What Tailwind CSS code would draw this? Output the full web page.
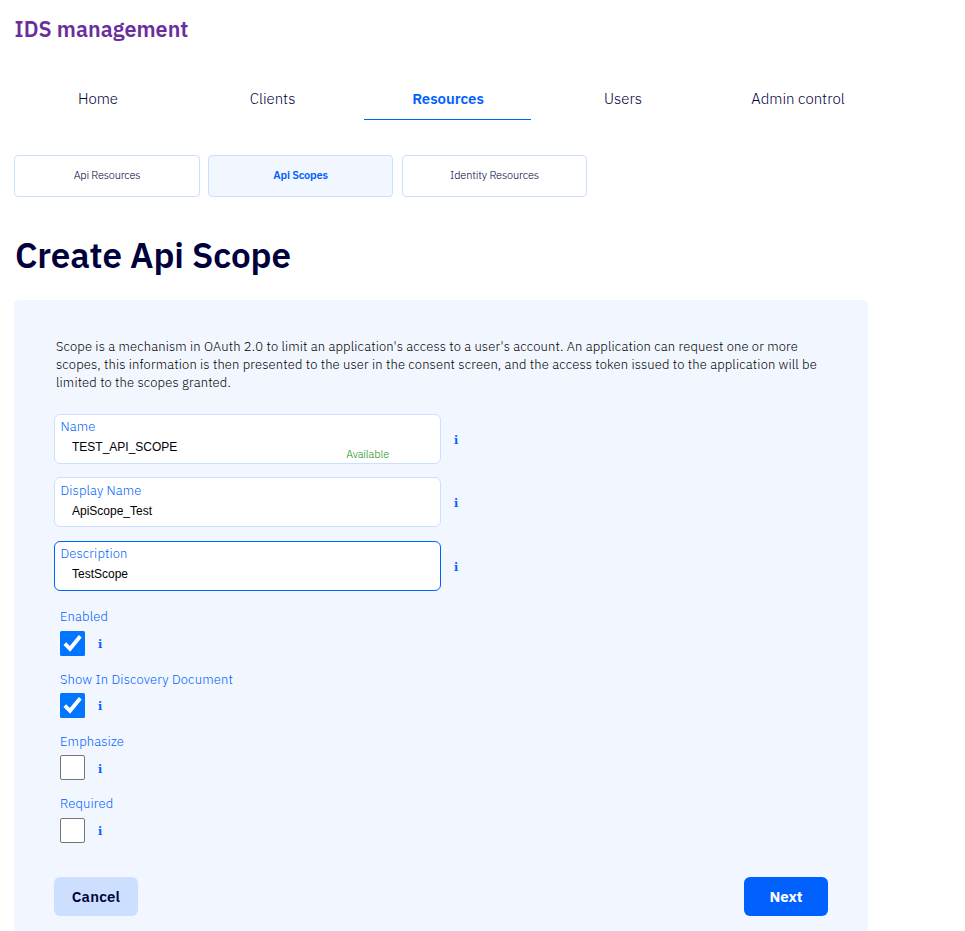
<!DOCTYPE html>
<html lang="en">
<head>
<meta charset="utf-8">
<title>IDS management</title>
<script src="https://cdn.jsdelivr.net/npm/@tailwindcss/browser@4"></script>
</head>
<body class="bg-white h-[931px] overflow-hidden font-['IBM_Plex_Sans','Roboto',sans-serif] font-light text-[#00003c]">
<div class="w-[854px] ml-[14px]">
  <header class="h-[60px] pt-[15px]"><a class="block w-fit pl-[0.5px] text-[21.5px] leading-[29px] font-semibold tracking-[0.05px] text-[#6a2e9c]">IDS management</a></header>
  <nav class="h-[60px] w-[867px] pt-[19px] grid grid-cols-5 gap-2 text-center text-[15px] leading-[40px]">
    <a class="pl-px">Home</a>
    <a>Clients</a>
    <a class="pl-px border-b border-[#0061ff] text-[#0061ff] font-semibold tracking-[-0.05px]">Resources</a>
    <a class="pl-px">Users</a>
    <a class="pl-px">Admin control</a>
  </nav>
  <div class="mt-[35px] w-[573px] flex text-center text-[11px] leading-[38px] tracking-[-0.2px]">
    <a class="w-[186px] h-[42px] mr-2 border border-[#ccdfff] rounded">Api Resources</a>
    <a class="w-[185px] h-[42px] mr-[9px] border border-[#ccdfff] rounded bg-[#f2f7ff] text-[#0061ff] font-semibold">Api Scopes</a>
    <a class="w-[185px] h-[42px] border border-[#ccdfff] rounded tracking-[-0.15px]">Identity Resources</a>
  </div>
  <h1 class="mt-[35px] h-[68px] pl-px text-[35px] leading-[47px] font-semibold tracking-[-0.1px]">Create Api Scope</h1>
  <main class="h-[640px] bg-[#f2f7ff] rounded-[5px] px-10 pt-[38px]">
    <p class="w-[774px] pl-[2px] text-[13px] leading-[18px] tracking-[0.14px] text-black">Scope is a mechanism in OAuth 2.0 to limit an application's access to a user's account. An application can request one or more<br>scopes, this information is then presented to the user in the consent screen, and the access token issued to the application will be<br>limited to the scopes granted.</p>
    <div class="mt-[22px] flex items-center">
      <div class="relative w-[387px] h-[50px] border border-[#ccdfff] rounded-md bg-white pl-[5.5px] pt-[3px]">
        <label class="block text-[13px] leading-[18px] tracking-[0.15px] text-[#0061ff]">Name</label>
        <div class="pl-[11.5px] mt-[2px] text-[12px] leading-[18px] font-normal text-black font-['Liberation_Sans',sans-serif]">TEST_API_SCOPE</div>
        <span class="absolute right-[51px] bottom-px text-[11px] leading-4 tracking-[-0.15px] text-[#169016]">Available</span>
      </div>
      <b class="ml-[13px] pt-[4px] text-[11px] leading-4 font-bold text-[#0061ff] font-['DejaVu_Serif',serif]">i</b>
    </div>
    <div class="mt-[13px] flex items-center">
      <div class="w-[387px] h-[50px] border border-[#ccdfff] rounded-md bg-white pl-[5.5px] pt-[4px]">
        <label class="block text-[13px] leading-[18px] tracking-[0.12px] text-[#0061ff]">Display Name</label>
        <div class="pl-[11.5px] mt-[2px] text-[12px] leading-[18px] font-normal text-black font-['Liberation_Sans',sans-serif]">ApiScope_Test</div>
      </div>
      <b class="ml-[13px] pt-[3px] text-[11px] leading-4 font-bold text-[#0061ff] font-['DejaVu_Serif',serif]">i</b>
    </div>
    <div class="mt-[14px] flex items-center">
      <div class="w-[387px] h-[50px] border border-[#0061ff] rounded-md bg-white pl-[5.5px] pt-[3px]">
        <label class="block text-[13px] leading-[18px] tracking-[0.12px] text-[#0061ff]">Description</label>
        <div class="pl-[11.5px] mt-[2px] text-[12px] leading-[18px] font-normal text-black font-['Liberation_Sans',sans-serif]">TestScope</div>
      </div>
      <b class="ml-[13px] pt-[3px] text-[11px] leading-4 font-bold text-[#0061ff] font-['DejaVu_Serif',serif]">i</b>
    </div>
    <div class="mt-[17px] pl-[6px] h-[62px]">
      <label class="block text-[13px] leading-[18px] tracking-[0.15px] text-[#0061ff]">Enabled</label>
      <div class="mt-[5px] flex items-center">
        <svg class="w-[25px] h-[25px]" viewBox="0 0 25 25"><rect width="25" height="25" rx="1.5" fill="#0075ff"/><path d="M4.8 12.6L10 17.8L20.3 5.2" fill="none" stroke="#fff" stroke-width="3.8"/></svg>
        <b class="ml-[13px] pt-[2px] text-[11px] leading-4 font-bold text-[#0061ff] font-['DejaVu_Serif',serif]">i</b>
      </div>
    </div>
    <div class="pl-[6px] h-[62px]">
      <label class="block pt-[1px] text-[13px] leading-[18px] tracking-[0.17px] text-[#0061ff]">Show In Discovery Document</label>
      <div class="mt-[4px] flex items-center">
        <svg class="w-[25px] h-[25px]" viewBox="0 0 25 25"><rect width="25" height="25" rx="1.5" fill="#0075ff"/><path d="M4.8 12.6L10 17.8L20.3 5.2" fill="none" stroke="#fff" stroke-width="3.8"/></svg>
        <b class="ml-[13px] pt-[2px] text-[11px] leading-4 font-bold text-[#0061ff] font-['DejaVu_Serif',serif]">i</b>
      </div>
    </div>
    <div class="pl-[6px] h-[62px]">
      <label class="block pt-[1px] text-[13px] leading-[18px] tracking-[0.15px] text-[#0061ff]">Emphasize</label>
      <div class="mt-[4px] flex items-center">
        <i class="w-[25px] h-[25px] bg-white border border-[#767676] rounded-[2px]"></i>
        <b class="ml-[13px] pt-[4px] text-[11px] leading-4 font-bold text-[#0061ff] font-['DejaVu_Serif',serif]">i</b>
      </div>
    </div>
    <div class="pl-[6px] h-[83px]">
      <label class="block pt-[1px] text-[13px] leading-[18px] tracking-[0.15px] text-[#0061ff]">Required</label>
      <div class="mt-[5px] flex items-center">
        <i class="w-[25px] h-[25px] bg-white border border-[#767676] rounded-[2px]"></i>
        <b class="ml-[13px] pt-[2px] text-[11px] leading-4 font-bold text-[#0061ff] font-['DejaVu_Serif',serif]">i</b>
      </div>
    </div>
    <div class="flex justify-between text-[15px] font-semibold">
      <button class="w-[84px] h-[39px] pt-px rounded-md bg-[#ccdfff] tracking-[0.2px]">Cancel</button>
      <button class="w-[84px] h-[39px] pt-px rounded-md bg-[#0061ff] font-bold text-white">Next</button>
    </div>
  </main>
</div>
</body>
</html>
